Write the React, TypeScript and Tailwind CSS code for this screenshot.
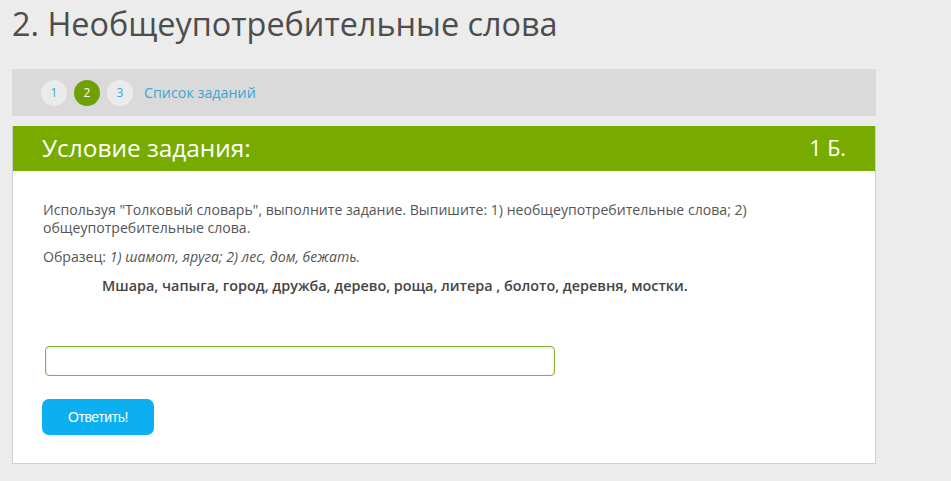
export default function App() {
  return (
    <div className="min-h-[481px] bg-[#ececec] pb-4 font-['Open_Sans',sans-serif] text-[#555]">
      <h1 className="pl-[12px] pt-[2px] text-[32.4px] leading-[42px] text-[#4d4d4d]">2. Необщеупотребительные слова</h1>
      <div className="ml-[12px] mt-[25px] w-[864px]">
        <nav className="flex h-[47px] items-center gap-[7px] bg-[#dadada] pl-[29px]">
          {[1, 2, 3].map((n) => (
            <span
              key={n}
              className={`flex h-[26px] w-[26px] items-center justify-center rounded-full text-[12px] ${
                n === 2 ? "bg-[#6fa004] text-white" : "bg-[#ebebeb] text-[#3ba5d8]"
              }`}
            >
              {n}
            </span>
          ))}
          <a className="ml-[4px] text-[14.3px] text-[#3ba5d8]">Список заданий</a>
        </nav>
        <section className="mt-[10px] border border-t-0 border-[#cfcfcf] bg-white">
          <div className="flex h-[45px] items-center justify-between bg-[#77ab00] px-[29px] text-white">
            <h2 className="text-[24.4px]">Условие задания:</h2>
            <span className="text-[21.5px]">1 Б.</span>
          </div>
          <div className="px-[30px] pb-[28px] pt-[30px] text-[14.1px] leading-[18px]">
            <p>
              Используя "Толковый словарь", выполните задание. Выпишите: 1) необщеупотребительные слова; 2)
              общеупотребительные слова.
            </p>
            <p className="mt-[11px]">
              Образец: <i>1) шамот, яруга; 2) лес, дом, бежать.</i>
            </p>
            <p className="mt-[11px] pl-[59px] text-[14.4px] font-semibold text-[#444]">
              Мшара, чапыга, город, дружба, дерево, роща, литера , болото, деревня, мостки.
            </p>
            <input
              type="text"
              className="mt-[51px] ml-[2px] block h-[30px] w-[510px] rounded-[4px] border border-[#86b03a] shadow-[inset_0_1px_3px_rgba(0,0,0,0.12)] outline-none"
            />
            <button className="mt-[23px] -ml-[1px] h-[36px] w-[112px] rounded-[7px] bg-[#0caff0] font-['Liberation_Sans',sans-serif] text-[14px] tracking-[-0.4px] text-white">
              Ответить!
            </button>
          </div>
        </section>
      </div>
    </div>
  );
}
